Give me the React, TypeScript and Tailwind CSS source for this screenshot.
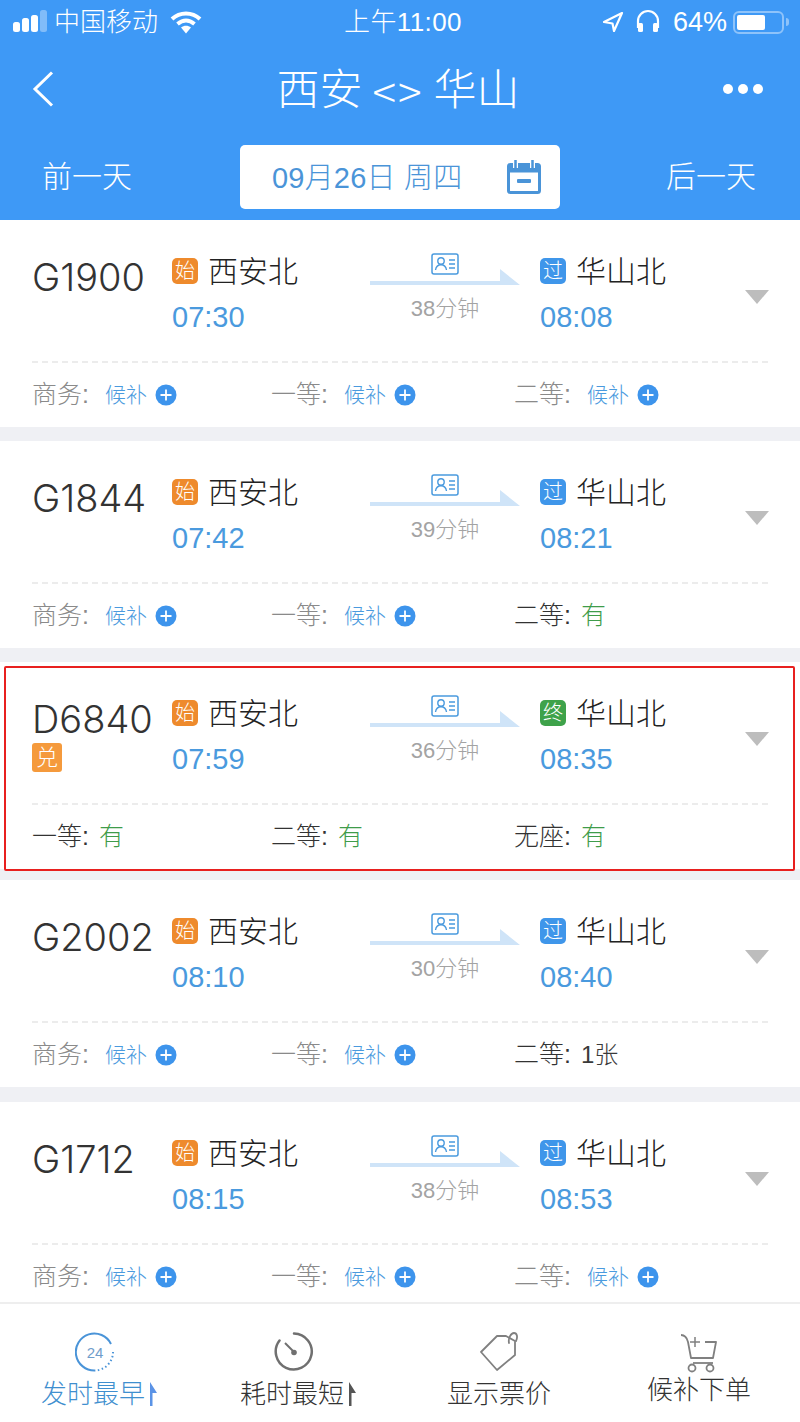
import React from "react";

const FONT = { fontFamily: "'Liberation Sans','Noto Sans CJK SC',sans-serif" };
const INTER = { fontFamily: "Inter,'Liberation Sans',sans-serif" };

type Seat = { label: string; value: string };
type Train = {
  no: string; from: string; to: string; dur: string; endBadge: string;
  seats: Seat[]; dui?: boolean; cls: string;
};

const W = "候补";
const trains: Train[] = [
  { no: "G1900", from: "07:30", to: "08:08", dur: "38分钟", endBadge: "过", cls: "h-[207px]", seats: [{ label: "商务", value: W }, { label: "一等", value: W }, { label: "二等", value: W }] },
  { no: "G1844", from: "07:42", to: "08:21", dur: "39分钟", endBadge: "过", cls: "h-[207px]", seats: [{ label: "商务", value: W }, { label: "一等", value: W }, { label: "二等", value: "有" }] },
  { no: "D6840", from: "07:59", to: "08:35", dur: "36分钟", endBadge: "终", dui: true, cls: "h-[207px]", seats: [{ label: "一等", value: "有" }, { label: "二等", value: "有" }, { label: "无座", value: "有" }] },
  { no: "G2002", from: "08:10", to: "08:40", dur: "30分钟", endBadge: "过", cls: "h-[207px]", seats: [{ label: "商务", value: W }, { label: "一等", value: W }, { label: "二等", value: "1张" }] },
  { no: "G1712", from: "08:15", to: "08:53", dur: "38分钟", endBadge: "过", cls: "h-[200px]", seats: [{ label: "商务", value: W }, { label: "一等", value: W }, { label: "二等", value: W }] },
];

function PlusDot() {
  return (
    <svg width="22" height="22" viewBox="0 0 22 22" className="ml-[8px] shrink-0">
      <circle cx="11" cy="11" r="10.500" fill="#3d94ec" />
      <path d="M5.500 11h11M11 5.500v11" stroke="#fff" strokeWidth="1.800" />
    </svg>
  );
}

function Badge({ t, color }: { t: string; color: string }) {
  return (
    <span className={`flex h-[26px] w-[26px] shrink-0 items-center justify-center rounded-[5px] text-[20px] font-light leading-none text-white ${color}`}>
      {t}
    </span>
  );
}

function SeatCell({ s, dark, w }: { s: Seat; dark: boolean; w: string }) {
  const isWait = s.value === W;
  const color = isWait ? "ml-[16px] text-[#4a9ade] text-[21px]" : s.value === "有" ? "ml-[10px] text-[#3f9c4a] text-[25px]" : "ml-[10px] text-[#3a3a3a] text-[24px]";
  return (
    <div className={`flex items-center ${w}`}>
      <span className={`text-[25px] font-light leading-none ${dark ? "text-[#333]" : "text-[#8a8a8a]"}`}>{s.label}:</span>
      <span className={`font-light leading-none ${color}`}>{s.value}</span>
      {isWait && <PlusDot />}
    </div>
  );
}

function TrainCard({ tr, idx }: { tr: Train; idx: number }) {
  const dark = idx === 2;
  return (
    <div className={`relative flex flex-col bg-white ${tr.cls}`}>
      <div className="flex h-[141px] pl-[32px] pr-[31px]">
        <div className="w-[140px] pt-[33px]">
          <div className="text-[38px] font-light leading-[48px] text-[#333]" style={INTER}>{tr.no}</div>
          {tr.dui && (
            <span className="flex h-[29px] w-[30px] items-center justify-center rounded-[3px] bg-[#f59a3c] text-[22px] font-light leading-none text-white">兑</span>
          )}
        </div>
        <div className="w-[198px] pt-[36px]">
          <div className="flex h-[30px] items-center">
            <Badge t="始" color="bg-[#ee8a2c]" />
            <span className="ml-[10px] pt-[2px] text-[30px] leading-none text-[#222] font-light">西安北</span>
          </div>
          <div className="mt-[15px] text-[29px] leading-[32px] text-[#4a9ade]">{tr.from}</div>
        </div>
        <div className="flex w-[170px] flex-col items-start pt-[33px]">
          <div className="flex w-[150px] justify-center">
            <svg width="28" height="22" viewBox="0 0 28 22">
              <rect x="1" y="1" width="26" height="20" rx="2" fill="none" stroke="#4a9ade" strokeWidth="1.500" />
              <circle cx="10" cy="8" r="3.200" fill="none" stroke="#4a9ade" strokeWidth="1.400" />
              <path d="M4.500 17c.6-3.600 2.600-5.200 5.500-5.200s4.900 1.600 5.500 5.200M18 7h6M18 11h6M18 15h6" fill="none" stroke="#4a9ade" strokeWidth="1.400" />
            </svg>
          </div>
          <svg width="150" height="16" viewBox="0 0 150 16" className="-mt-[6px] block">
            <path d="M0 12h130V0l20 16H0z" fill="#cfe4f8" />
          </svg>
          <div className="mt-[11px] w-[150px] text-center text-[22px] font-light leading-[26px] text-[#a3a3a3]">{tr.dur}</div>
        </div>
        <div className="flex-1 pt-[36px]">
          <div className="flex h-[30px] items-center">
            <Badge t={tr.endBadge} color={tr.endBadge === "终" ? "bg-[#3ea24a]" : "bg-[#3f96ea]"} />
            <span className="ml-[10px] pt-[2px] text-[30px] leading-none text-[#222] font-light">华山北</span>
          </div>
          <div className="mt-[15px] text-[29px] leading-[32px] text-[#4a9ade]">{tr.to}</div>
        </div>
        <div className="w-[24px] shrink-0 pt-[70px]">
          <div className="h-0 w-0 border-x-[12px] border-t-[14px] border-x-transparent border-t-[#bdbdbd]" />
        </div>
      </div>
      <div className="mx-[32px] border-t-2 border-dashed border-[#ececec]" />
      <div className="flex flex-1 items-start pl-[32px] pt-[19px]">
        <SeatCell s={tr.seats[0]} dark={dark} w="w-[239px]" />
        <SeatCell s={tr.seats[1]} dark={dark} w="w-[243px]" />
        <SeatCell s={tr.seats[2]} dark={dark || tr.seats[2].value !== W} w="" />
      </div>
      {dark && <div className="pointer-events-none absolute left-[4px] right-[5px] top-[4px] h-[205px] rounded-[2px] border-2 border-[#e8201f]" />}
    </div>
  );
}

function StatusBar() {
  return (
    <div className="relative flex h-[44px] items-center justify-between pl-[12px] pr-[11px] text-white">
      <div className="flex items-center">
        <svg width="37" height="22" viewBox="0 0 37 22" className="-mt-[2px]">
          <rect x="1" y="12" width="7" height="10" rx="2.500" fill="#fff" />
          <rect x="10" y="8" width="7" height="14" rx="2.500" fill="#fff" />
          <rect x="19" y="5" width="7" height="17" rx="2.500" fill="#fff" />
          <rect x="28" y="0" width="7" height="22" rx="2.500" fill="#fff" fillOpacity=".35" />
        </svg>
        <span className="ml-[5px] text-[26px] font-light leading-none">中国移动</span>
        <svg width="32" height="24" viewBox="0 0 32 24" className="ml-[12px]">
          <path d="M2 9c8-7.500 20-7.500 28 0" fill="none" stroke="#fff" strokeWidth="4" />
          <path d="M7.500 14c5.500-4.500 11.500-4.500 17 0" fill="none" stroke="#fff" strokeWidth="4" />
          <path d="M16 23.500l-5-6c3-2.500 7-2.500 10 0z" fill="#fff" />
        </svg>
      </div>
      <span className="absolute left-[344px] top-[6px] text-[26px] font-light leading-[32px] tracking-[0.4px]">上午11:00</span>
      <div className="flex items-center">
        <svg width="22" height="22" viewBox="0 0 22 22">
          <path d="M20 2L2 11l8.500 1.500L12 20z" fill="none" stroke="#fff" strokeWidth="2.200" strokeLinejoin="round" />
        </svg>
        <svg width="26" height="26" viewBox="0 0 26 26" className="ml-[11px]">
          <path d="M3 19v-7a10 10 0 0 1 20 0v7" fill="none" stroke="#fff" strokeWidth="2.200" />
          <rect x="3" y="14" width="5" height="9" rx="1.500" fill="#fff" />
          <rect x="18" y="14" width="5" height="9" rx="1.500" fill="#fff" />
        </svg>
        <span className="ml-[12px] text-[27px] font-light leading-none">64%</span>
        <div className="ml-[6px] flex items-center">
          <div className="h-[23px] w-[51px] rounded-[6px] border-2 border-[#8ec3fa] p-[2px]">
            <div className="h-full w-[28px] rounded-[2px] bg-white" />
          </div>
          <div className="ml-[2px] h-[8px] w-[3px] rounded-r bg-[#8ec3fa]" />
        </div>
      </div>
    </div>
  );
}

function Header() {
  return (
    <div className="relative h-[220px] bg-[#3e99f6] text-white">
      <StatusBar />
      <div className="flex h-[90px] items-center justify-between pl-[32px] pr-[37px]">
        <div className="w-[40px]">
          <svg width="22" height="36" viewBox="0 0 22 36">
            <path d="M20 1.500L3 18l17 16.500" fill="none" stroke="#fff" strokeWidth="3" />
          </svg>
        </div>
        <div className="ml-[1px] flex items-center pt-[2px] text-[43px] font-light leading-none">
          <span>西安</span>
          <span className="ml-[10px] text-[44px] font-extralight tracking-[2px]" style={{ fontFamily: "'Noto Sans CJK SC',sans-serif" }}>&lt;&gt;</span>
          <span className="ml-[10px]">华山</span>
        </div>
        <div className="flex w-[40px] gap-[5px]">
          <span className="h-[10px] w-[10px] rounded-full bg-white" />
          <span className="h-[10px] w-[10px] rounded-full bg-white" />
          <span className="h-[10px] w-[10px] rounded-full bg-white" />
        </div>
      </div>
      <div className="mt-[11px] flex items-center justify-between pl-[42px] pr-[44px]">
        <span className="text-[30px] font-light leading-none">前一天</span>
        <div className="ml-[2px] flex h-[64px] w-[320px] items-center rounded-[5px] bg-white pl-[32px] text-[#4a94d8]">
          <span className="pt-[2px] text-[29px] font-light leading-none tracking-[0.2px]">09月26日 周四</span>
          <svg width="34" height="34" viewBox="0 0 34 34" className="ml-[45px]">
            <rect x="1.500" y="4.500" width="31" height="28" rx="2" fill="none" stroke="#4a94d8" strokeWidth="3" />
            <rect x="1.500" y="4.500" width="31" height="8" fill="#4a94d8" />
            <path d="M8.500 0v8M25.500 0v8" stroke="#fff" strokeWidth="5" />
            <path d="M8.500 0v8M25.500 0v8" stroke="#4a94d8" strokeWidth="2.500" />
            <rect x="10" y="19" width="14" height="4" rx="1" fill="#4a94d8" />
          </svg>
        </div>
        <span className="text-[30px] font-light leading-none">后一天</span>
      </div>
    </div>
  );
}

function BottomBar() {
  return (
    <div className="flex h-[120px] items-start border-t-2 border-[#eeeeee] bg-white pt-[28px]">
      <div className="flex w-[189px] flex-col items-center pl-[10px]">
        <svg width="40" height="40" viewBox="0 0 40 40" className="mr-[10px]">
          <path d="M36 12A18.500 18.500 0 1 0 20 38.500" fill="none" stroke="#4a94d8" strokeWidth="2" />
          <path d="M38 20a18.500 18.500 0 0 1-18 18.500" fill="none" stroke="#4a94d8" strokeWidth="2" strokeDasharray="1.500 2.500" />
          <text x="20" y="26" textAnchor="middle" fontSize="15" fill="#6f9dcb" fontFamily="Liberation Sans">24</text>
        </svg>
        <div className="mt-[6px] flex items-center text-[26px] font-light leading-[32px] text-[#3f8fcf]">
          发时最早
          <svg width="10" height="24" viewBox="0 0 10 24" className="ml-[3px]"><path d="M2 0l7 11H4.500v13H2z" fill="#5b93e6" /></svg>
        </div>
      </div>
      <div className="flex w-[215px] flex-col items-center pl-[4px]">
        <svg width="40" height="40" viewBox="0 0 40 40" className="mr-[10px]">
          <path d="M20 1.500A18 18 0 1 1 5.500 8.500" fill="none" stroke="#707070" strokeWidth="2.500" strokeLinecap="round" />
          <path d="M11 11l9 9" stroke="#707070" strokeWidth="2" />
          <circle cx="20" cy="20.500" r="2.800" fill="#707070" />
        </svg>
        <div className="mt-[6px] flex items-center text-[26px] font-light leading-[32px] text-[#333]">
          耗时最短
          <svg width="10" height="24" viewBox="0 0 10 24" className="ml-[3px]"><path d="M2 0l7 11H4.500v13H2z" fill="#555" /></svg>
        </div>
      </div>
      <div className="flex w-[200px] flex-col items-center pr-[10px]">
        <svg width="42" height="40" viewBox="0 0 42 40" className="ml-[2px]">
          <path d="M18 4h9l9 5v14L18 38 2 20z" fill="none" stroke="#808080" strokeWidth="1.800" strokeLinejoin="round" />
          <path d="M30 11c-1-5 2-10 5-10s4 4 2 8" fill="none" stroke="#808080" strokeWidth="1.800" strokeLinecap="round" />
        </svg>
        <div className="mt-[6px] text-[26px] font-light leading-[32px] text-[#333]">显示票价</div>
      </div>
      <div className="flex w-[196px] flex-col items-center pr-[6px]">
        <svg width="40" height="40" viewBox="0 0 40 40" className="mt-[2px]">
          <path d="M2 1c4 0 6 3 7 7l3 16h22l3-16H26" fill="none" stroke="#808080" strokeWidth="1.800" strokeLinejoin="round" />
          <path d="M14 29h20" stroke="#808080" strokeWidth="1.800" />
          <circle cx="13" cy="34" r="3.500" fill="none" stroke="#808080" strokeWidth="1.800" />
          <circle cx="31" cy="34" r="3.500" fill="none" stroke="#808080" strokeWidth="1.800" />
          <path d="M16 3v10M11 8h10" stroke="#808080" strokeWidth="1.500" />
        </svg>
        <div className="mt-0 text-[26px] font-light leading-[32px] text-[#333]">候补下单</div>
      </div>
    </div>
  );
}

export default function App() {
  return (
    <div className="relative flex h-[1422px] w-[800px] flex-col overflow-hidden bg-[#eff0f4]" style={FONT}>
      <Header />
      <div className="flex h-[1082px] flex-col overflow-hidden">
        {trains.map((t, i) => (
          <div key={t.no} className={i === 3 ? "mt-[11px]" : i === 4 ? "mt-[15px]" : i > 0 ? "mt-[14px]" : ""}>
            <TrainCard tr={t} idx={i} />
          </div>
        ))}
      </div>
      <BottomBar />
    </div>
  );
}
